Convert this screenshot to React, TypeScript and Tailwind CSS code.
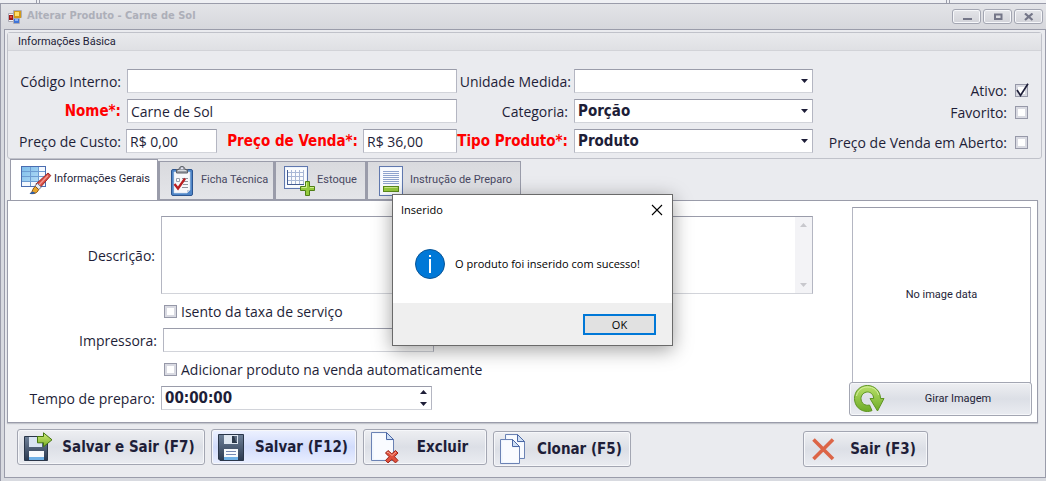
import React, { useState } from "react";

const fieldBorder =
  "border border-t-[#9a9caa] border-l-[#b4b6c2] border-r-[#b4b6c2] border-b-[#d2d4da] bg-white outline-none";
const textField = `${fieldBorder} h-6 px-[3px] text-[14px] text-[#1e1e38]`;
const buttonBase =
  "flex items-center rounded-[3px] border border-[#a3a6b2] bg-linear-to-b shadow-[inset_0_0_0_1px_#f6f7fa]";
const buttonGrey = "from-[#eeeff2] via-[#dcdfe6] to-[#eaecf1]";
const buttonBlue = "from-[#eef2ff] via-[#d2dcfc] to-[#eaefff]";
const boldFont = "font-['DejaVu_Sans_Condensed','DejaVu_Sans',sans-serif] font-bold";
const smallFont = "font-['Roboto',sans-serif] text-[11px]";

function AppIcon() {
  return (
    <svg width="14" height="14" viewBox="0 0 14 14" aria-hidden="true">
      <path d="M.5 3.500h5v8h-5zM5.500.5h8v7h-8zM5.500 8.500h6v5h-6z" fill="#f4f4f7" stroke="#aaa9b4" />
      <rect x="1" y="5" width="4" height="5" fill="#a01818" />
      <rect x="2" y="6" width="2" height="2" fill="#e04a3a" />
      <rect x="6" y="1" width="7" height="7" fill="#d29a18" />
      <rect x="7" y="2" width="4" height="4" fill="#ffe06a" />
      <rect x="6" y="9" width="5" height="4" fill="#3f74d8" />
      <rect x="7" y="9" width="3" height="2" fill="#8bb4f5" />
    </svg>
  );
}

function TableBrushIcon() {
  return (
    <svg width="32" height="32" viewBox="0 0 32 32" aria-hidden="true">
      <defs>
        <linearGradient id="cells" x1="0" y1="0" x2="1" y2="1">
          <stop offset="0" stopColor="#7dbdea" />
          <stop offset="1" stopColor="#b2dbf6" />
        </linearGradient>
      </defs>
      <rect x="1.500" y="2.500" width="24" height="20" fill="#f3f8fe" stroke="#4a6cb0" />
      <rect x="2" y="3" width="16" height="15" fill="url(#cells)" />
      <path d="M2 7.500h23M2 12.500h23M2 17.500h23M10.500 3v19M18.500 3v19" stroke="#6d9cd2" fill="none" />
      <path d="M28 9l2.800 2.500-11 12.500-4-3.800z" fill="#d94a40" stroke="#9c2b28" />
      <path d="M28 11.500L18 22" stroke="#f49a90" strokeWidth="1.400" />
      <path d="M17.500 19.500l3.800 3.700-2.500 2.300-4-3.500z" fill="#e8ebf2" stroke="#74809a" />
      <path d="M15.500 22.500l3 3c-1 4-5 4.500-8 4 2.500-2 2-6 5-7z" fill="#e8a52c" stroke="#8c5712" />
      <path d="M9.500 29.800c1.500.6 4.500.2 6-1l-3-1.300z" fill="#2b5fae" />
    </svg>
  );
}

function ClipboardIcon() {
  return (
    <svg width="32" height="32" viewBox="0 0 32 32" aria-hidden="true">
      <rect x="5.500" y="4.500" width="21" height="26" rx="1.500" fill="#4f86c8" stroke="#2c5590" />
      <path d="M8 7h16v18l-3 3H8z" fill="#f7f8fb" stroke="#d2dcec" strokeWidth=".6" />
      <path d="M24 25l-3 3v-3z" fill="#c3cddd" />
      <path d="M13 4.500c0-4 6-4 6 0h2.500v3.500h-11V4.500z" fill="#9a9ea6" stroke="#5c6068" />
      <path d="M12 5.500h8" stroke="#d9dce0" />
      <circle cx="16" cy="3.300" r="1" fill="#eef" />
      <path d="M10.500 13.500h3v3h-3z" fill="#fff" stroke="#999eaa" />
      <path d="M16 13.500h6M18 16.500h4M17 19.500h5M16 22.500h6" stroke="#8e949f" />
      <path d="M8.500 19l3.500 4.500 7-10" fill="none" stroke="#b81e22" strokeWidth="2.300" />
    </svg>
  );
}

function TableAddIcon() {
  return (
    <svg width="32" height="32" viewBox="0 0 32 32" aria-hidden="true">
      <rect x="1.500" y="1.500" width="23" height="22" fill="#eef4fc" stroke="#5f77ae" />
      <rect x="3" y="3" width="20" height="19" fill="#fff" opacity=".7" />
      <path d="M4 7.500h17M4 11.500h17M4 15.500h17M8.500 5v14M12.500 5v14M16.500 5v14M20.500 5v14" stroke="#a9b8d6" fill="none" />
      <path d="M4.500 5v15M4 19.500h17" stroke="#435c92" fill="none" />
      <path d="M22.500 16.500h4v5h5v4h-5v5h-4v-5h-5v-4h5z" fill="#93c93c" stroke="#4f7f16" />
      <path d="M23.500 17.500v5h-5M27 22.500h4" stroke="#d2ee92" fill="none" />
    </svg>
  );
}

function DocumentIcon() {
  return (
    <svg width="32" height="32" viewBox="0 0 32 32" aria-hidden="true">
      <rect x="4.500" y="1.500" width="23" height="29" fill="#f1f6fd" stroke="#6078ae" />
      <rect x="6" y="3" width="20" height="26" fill="#fff" opacity=".6" />
      <path d="M8 6.500h16M8 8.500h16M8 10.500h16M8 12.500h16M8 14.500h16M8 16.500h16M8 18.500h16" stroke="#8ea3cd" />
      <rect x="8.500" y="21.500" width="15" height="5" fill="#95c93e" stroke="#5b8a1c" />
      <path d="M9.500 22.500h13" stroke="#cbe889" />
    </svg>
  );
}

function Floppy({ arrow = false }: { arrow?: boolean }) {
  return (
    <svg width="32" height="32" viewBox="0 0 32 32" aria-hidden="true">
      <defs>
        <linearGradient id="floppyBody" x1="0" y1="0" x2="0" y2="1">
          <stop offset="0" stopColor="#6f8199" />
          <stop offset="1" stopColor="#2b3950" />
        </linearGradient>
        <linearGradient id="arrowFill" x1="0" y1="0" x2="0" y2="1">
          <stop offset="0" stopColor="#d2ee7c" />
          <stop offset="1" stopColor="#77ad22" />
        </linearGradient>
      </defs>
      {arrow ? (
        <>
          <path d="M3.500 5.500h23v24h-23z" fill="url(#floppyBody)" stroke="#2a3649" />
          <path d="M8 6h13v10H8z" fill="#d9e4f3" />
          <path d="M8 20h15v9H8z" fill="#f8fafd" />
          <path d="M8 26h15v3H8z" fill="#6fb0e6" />
          <path d="M16.500 5.500h6V1.800l8.500 7-8.500 7v-4h-6z" fill="url(#arrowFill)" stroke="#447510" strokeLinejoin="round" />
        </>
      ) : (
        <>
          <path d="M3.500 3.500h25v26H5l-1.500-1.500z" fill="url(#floppyBody)" stroke="#2a3649" />
          <path d="M9 4h14v9H9z" fill="#dfe7f1" />
          <path d="M17 5h5v7h-5z" fill="#2c3849" />
          <path d="M19 5h3v6h-1z" fill="#5b6b82" />
          <path d="M9 18h14v11H9z" fill="#f8fafd" />
          <path d="M9 26h14v3H9z" fill="#6fb0e6" />
          <path d="M11 20.500h10M11 23.500h10" stroke="#7688b2" />
        </>
      )}
    </svg>
  );
}

function PageShape({ x, y, w, h }: { x: number; y: number; w: number; h: number }) {
  const r = x + w;
  return (
    <>
      <path d={`M${x} ${y}h${w - 7}l7 7v${h - 7}h${-w}z`} fill="#f0f6fe" stroke="#6b82b4" />
      <path d={`M${x + 1.5} ${y + 1.5}h${w - 9}v7h7v${h - 10}h${3 - w}z`} fill="#fff" opacity=".6" />
      <path d={`M${r - 7} ${y}v7h7z`} fill="#cfdff4" stroke="#4c68a6" />
    </>
  );
}

function DeletePageIcon() {
  return (
    <svg width="32" height="32" viewBox="0 0 32 32" aria-hidden="true">
      <PageShape x={4.5} y={1.5} w={22} h={28} />
      <path d="M18.500 22l2.500-2.500 3.800 3.300 3.700-3.300 2.500 2.500-3.500 3.700 3.500 3.700-2.500 2.500-3.700-3.500-3.800 3.500-2.500-2.500 3.600-3.700z" fill="#e0503c" stroke="#9b2418" strokeLinejoin="round" />
      <path d="M20 22l1-1 4 3.500L29 21" stroke="#f8a492" fill="none" />
    </svg>
  );
}

function CopyIcon() {
  return (
    <svg width="32" height="32" viewBox="0 0 32 32" aria-hidden="true">
      <PageShape x={8.5} y={1.5} w={19} h={24} />
      <PageShape x={3.5} y={6.5} w={19} h={24} />
    </svg>
  );
}

function RotateIcon() {
  return (
    <svg width="32" height="32" viewBox="0 0 32 32" aria-hidden="true">
      <defs>
        <linearGradient id="rot" x1="0" y1="0" x2="0" y2="1">
          <stop offset="0" stopColor="#b9e06a" />
          <stop offset="1" stopColor="#6dab26" />
        </linearGradient>
      </defs>
      <path
        d="M27.500 15.500C27.500 8 21.500 2.500 14.500 2.500 7 2.500 1.500 8 1.500 15.500S7 28.500 14.500 28.500c1.500 0 3-.3 4.500-.9l-2.500-5.600c-4.500 1.300-8.500-2-8.500-6.500 0-3.500 3-6.500 6.500-6.500 3 0 6 2.300 6.200 6.500H17l7.500 12.500 6.500-12.500z"
        fill="url(#rot)"
        stroke="#5d9420"
        strokeLinejoin="round"
      />
      <path d="M3.500 13C5 6.500 10 4 14.500 4 20 4 24.500 7 25.500 12" fill="none" stroke="#d6efa0" />
    </svg>
  );
}

function ExitIcon() {
  return (
    <svg width="32" height="32" viewBox="0 0 32 32" aria-hidden="true">
      <path d="M6.500 6.500l19.500 19.500M26 6.500L6.500 26" stroke="#dc6547" strokeWidth="3.600" />
    </svg>
  );
}

function Check({ id, on = false }: { id: string; on?: boolean }) {
  const [checked, setChecked] = useState(on);
  return (
    <span className="relative flex size-[13px] shrink-0">
      <input
        id={id}
        type="checkbox"
        checked={checked}
        onChange={(e) => setChecked(e.target.checked)}
        className="size-[13px] appearance-none border border-[#9698a8] bg-white shadow-[inset_0_0_0_2px_#d9dae2]"
      />
      {checked && (
        <svg width="15" height="15" viewBox="0 0 15 15" className="pointer-events-none absolute -top-px left-0" aria-hidden="true">
          <path d="M2 7l3.500 5.500L13 .8" fill="none" stroke="#1e1e38" strokeWidth="1.700" />
        </svg>
      )}
    </span>
  );
}

function Combo({ id, value }: { id: string; value: string }) {
  return (
    <span className="relative flex w-[239px]">
      <select id={id} defaultValue={value} className={`${fieldBorder} ${boldFont} h-6 w-full appearance-none px-[3px] text-[15px] text-[#1e1e38]`}>
        <option value={value}>{value}</option>
      </select>
      <svg width="7" height="4" viewBox="0 0 7 4" className="pointer-events-none absolute top-[10px] right-[5px]" aria-hidden="true">
        <path d="M0 0h7L3.500 4z" fill="#1e1e38" />
      </svg>
    </span>
  );
}

function Label({ id, className = "text-[14px]", children }: { id: string; className?: string; children: React.ReactNode }) {
  return (
    <label htmlFor={id} className={`shrink-0 whitespace-nowrap text-right ${className}`}>
      {children}
    </label>
  );
}

const required = `${boldFont} text-[15px] text-[#ff0000]`;

function WindowButton({ label, children }: { label: string; children: React.ReactNode }) {
  return (
    <button aria-label={label} className={`${buttonBase} from-[#e4e5e9] to-[#d2d3d9] h-[15px] w-[29px] justify-center`}>
      <svg width="10" height="8" viewBox="0 0 10 8" aria-hidden="true">
        {children}
      </svg>
    </button>
  );
}

function Tab({ active = false, className = "", icon, children }: { active?: boolean; className?: string; icon: React.ReactNode; children: React.ReactNode }) {
  return (
    <button
      role="tab"
      aria-selected={active}
      className={`${smallFont} flex items-center border border-[#9a9caa] whitespace-nowrap ${
        active
          ? "-mb-px h-[42px] border-b-0 bg-white pb-[2px] text-[#1e1e38]"
          : "h-[39px] border-l-2 bg-linear-to-b from-[#d9dade] to-[#e4e5e9] text-[#484862]"
      } ${className}`}
    >
      {icon}
      {children}
    </button>
  );
}

function ActionButton({ className = "", blue = false, icon, children }: { className?: string; blue?: boolean; icon: React.ReactNode; children: React.ReactNode }) {
  return (
    <button className={`${buttonBase} ${blue ? buttonBlue : buttonGrey} ${boldFont} h-9 pl-[3px] text-[15px] ${className}`}>
      {icon}
      <span className="flex-1 whitespace-nowrap text-center">{children}</span>
    </button>
  );
}

export default function App() {
  return (
    <div className="relative flex min-h-screen flex-col bg-[#d8dae0] font-['Open_Sans',sans-serif] text-[#1e1e38]">
      <div className="flex h-[3px] justify-between bg-[#eff0f4] px-9">
        <span className="w-1 border-x border-[#9a9caa]" />
        <span className="mr-[60px] w-1 border-x border-[#9a9caa]" />
      </div>
      <div className="flex flex-1 flex-col border-t border-l border-[#9a9caa] pl-[3px]">
        <header className="-ml-[3px] flex h-[25px] items-center bg-linear-to-b from-[#e3e4e8] to-[#d6d7dc] pr-[3px] pl-[7px]">
          <AppIcon />
          <h1 className={`${boldFont} ml-[5px] flex-1 text-[11px] text-[#adafb9]`}>Alterar Produto - Carne de Sol</h1>
          <div className="flex gap-[2px]">
            <WindowButton label="Minimizar">
              <path d="M1 6h9" stroke="#747688" strokeWidth="2" />
            </WindowButton>
            <WindowButton label="Maximizar">
              <path d="M2 1.500h6.500v4.500H2z" fill="none" stroke="#747688" strokeWidth="2" />
            </WindowButton>
            <WindowButton label="Fechar">
              <path d="M1 .5l7.500 6.500M8.500.5L1 7" stroke="#747688" strokeWidth="2.200" />
            </WindowButton>
          </div>
        </header>

        <main className="mb-[3px] flex flex-1 flex-col border border-[#9a9caa] bg-[#eaebef] pt-[2px] pr-[3px] pl-[2px]">
          <section className="rounded-[3px] border border-[#c0c2ca]">
            <h2 className={`${smallFont} h-[18px] border-b border-[#d2d3d8] bg-linear-to-b from-[#e9eaed] to-[#dfe0e4] pl-[10px] leading-[18px]`}>
              Informações Básica
            </h2>
            <div className="flex pt-[18px] pb-[5px]">
              <div className="flex min-w-0 flex-1 flex-col gap-[6px]">
                <div className="flex items-center">
                  <Label id="codigo" className="mr-[6px] w-[113px] text-[14px]">Código Interno:</Label>
                  <input id="codigo" className={`${textField} min-w-0 flex-1`} />
                  <Label id="unidade" className="mr-[3px] w-[114px] text-[14px]">Unidade Medida:</Label>
                  <Combo id="unidade" value="" />
                </div>
                <div className="flex items-center">
                  <Label id="nome" className={`${required} mr-[6px] w-[113px]`}>Nome*:</Label>
                  <input id="nome" defaultValue="Carne de Sol" className={`${textField} min-w-0 flex-1`} />
                  <Label id="categoria" className="mr-[6px] w-[111px] text-[14px]">Categoria:</Label>
                  <Combo id="categoria" value="Porção" />
                </div>
                <div className="flex items-center">
                  <Label id="custo" className="mr-[5px] w-[113px] text-[14px]">Preço de Custo:</Label>
                  <input id="custo" defaultValue="R$ 0,00" className={`${textField} w-[91px]`} />
                  <Label id="venda" className={`${required} mr-[5px] ml-auto`}>Preço de Venda*:</Label>
                  <input id="venda" defaultValue="R$ 36,00" className={`${textField} w-[94px]`} />
                  <Label id="tipo" className={`${required} mr-[6px] w-[111px]`}>Tipo Produto*:</Label>
                  <Combo id="tipo" value="Produto" />
                </div>
              </div>
              <div className="flex w-[228px] flex-col items-end pt-[9px] pr-[13px]">
                <div className="flex h-6 items-center gap-2"><Label id="ativo">Ativo:</Label><Check id="ativo" on /></div>
                <div className="flex h-5 items-center gap-2"><Label id="favorito">Favorito:</Label><Check id="favorito" /></div>
                <div className="mt-[10px] flex h-5 items-center gap-2"><Label id="aberto">Preço de Venda em Aberto:</Label><Check id="aberto" /></div>
              </div>
            </div>
          </section>

          <div role="tablist" className="flex h-[41px] items-end pl-[3px]">
            <Tab active className="w-[148px] gap-[2px] pl-[9px]" icon={<TableBrushIcon />}>Informações Gerais</Tab>
            <Tab className="w-[116px] gap-[3px] border-l-0 pl-[6px]" icon={<ClipboardIcon />}>Ficha Técnica</Tab>
            <Tab className="w-[92px] gap-[2px] pl-[7px]" icon={<TableAddIcon />}>Estoque</Tab>
            <Tab className="w-[155px] gap-[3px] pl-[7px]" icon={<DocumentIcon />}>Instrução de Preparo</Tab>
          </div>

          <section className="mr-1 flex border border-[#9a9caa] bg-white py-[6px] shadow-[0_1px_1px_#c4c6cd]">
            <div className="flex min-w-0 flex-1 flex-col">
              <div className="mt-[9px] flex items-center">
                <Label id="descricao" className="mr-[6px] w-[147px] text-[14px]">Descrição:</Label>
                <div className={`${fieldBorder} flex h-[78px] flex-1`}>
                  <textarea id="descricao" className="min-w-0 flex-1 resize-none p-1 text-[14px] outline-none" />
                  <div className="flex w-[17px] flex-col items-center justify-between bg-[#f3f3f6] py-[6px]">
                    <svg width="7" height="4" viewBox="0 0 7 4" aria-hidden="true"><path d="M0 4h7L3.500 0z" fill="#c8c8cd" /></svg>
                    <svg width="7" height="4" viewBox="0 0 7 4" aria-hidden="true"><path d="M0 0h7L3.500 4z" fill="#c8c8cd" /></svg>
                  </div>
                </div>
              </div>
              <div className="flex h-[34px] items-center gap-1 pl-[156px]"><Check id="isento" /><Label id="isento">Isento da taxa de serviço</Label></div>
              <div className="flex items-center">
                <Label id="impressora" className="mr-[6px] w-[149px] text-[14px]">Impressora:</Label>
                <input id="impressora" className={`${textField} w-[271px]`} />
              </div>
              <div className="flex h-[34px] items-center gap-1 pl-[156px]"><Check id="adicionar" /><Label id="adicionar">Adicionar produto na venda automaticamente</Label></div>
              <div className="flex items-center">
                <Label id="tempo" className="mr-[6px] w-[147px] text-[14px]">Tempo de preparo:</Label>
                <div className={`${fieldBorder} flex h-6 w-[271px] items-center`}>
                  <input id="tempo" defaultValue="00:00:00" className={`${boldFont} min-w-0 flex-1 px-[3px] text-[15px] outline-none`} />
                  <div className="mr-1 flex flex-col gap-2">
                    <button aria-label="Aumentar"><svg className="block" width="7" height="4" viewBox="0 0 7 4"><path d="M0 4h7L3.500 0z" fill="#1e1e38" /></svg></button>
                    <button aria-label="Diminuir"><svg className="block" width="7" height="4" viewBox="0 0 7 4"><path d="M0 0h7L3.500 4z" fill="#1e1e38" /></svg></button>
                  </div>
                </div>
              </div>
            </div>
            <div className="ml-9 flex w-[188px] flex-col pr-[5px]">
              <div className={`${smallFont} ml-[3px] flex h-[176px] w-[179px] items-center justify-center border border-[#b4b6c2] border-t-[#9a9caa]`}>No image data</div>
              <button className={`${buttonBase} ${buttonGrey} ${smallFont} -mt-px h-[34px] pl-[3px]`}>
                <RotateIcon />
                <span className="flex-1 text-center">Girar Imagem</span>
              </button>
            </div>
          </section>

          <footer className="flex items-start pt-[6px] pb-[9px] pl-[10px]">
            <ActionButton className="w-[188px]" icon={<Floppy arrow />}>Salvar e Sair (F7)</ActionButton>
            <ActionButton blue className="ml-[6px] w-[146px]" icon={<Floppy />}>Salvar (F12)</ActionButton>
            <ActionButton className="ml-[6px] w-[124px]" icon={<DeletePageIcon />}>Excluir</ActionButton>
            <ActionButton className="mt-[2px] ml-[6px] w-[138px]" icon={<CopyIcon />}>Clonar (F5)</ActionButton>
            <ActionButton className="mt-[2px] mr-[114px] ml-auto w-[125px]" icon={<ExitIcon />}>Sair (F3)</ActionButton>
          </footer>
        </main>
      </div>

      <div
        role="dialog"
        aria-labelledby="dialog-title"
        className="absolute top-[194px] left-[392px] flex w-[281px] flex-col border border-[#6a6a6a] bg-white text-[11px] text-black shadow-[0_4px_18px_rgba(0,0,0,0.38)]"
      >
        <div className="flex h-[30px] items-center justify-between pr-[9px] pl-2">
          <h2 id="dialog-title">Inserido</h2>
          <button aria-label="Fechar mensagem">
            <svg className="block" width="12" height="12" viewBox="0 0 12 12"><path d="M1 1l10 10M11 1L1 11" stroke="#000" strokeWidth="1.100" /></svg>
          </button>
        </div>
        <div className="flex h-[78px] items-center gap-[10px] pl-[22px]">
          <svg width="30" height="30" viewBox="0 0 30 30" aria-hidden="true">
            <circle cx="15" cy="15" r="14.500" fill="#0078d7" stroke="#0a5596" />
            <path d="M15 6v2M15 10v14" stroke="#fff" strokeWidth="2" />
          </svg>
          <p className="whitespace-nowrap">O produto foi inserido com sucesso!</p>
        </div>
        <div className="flex h-[42px] items-center justify-end bg-[#efefef] pr-4">
          <button className="h-[21px] w-[73px] border-2 border-[#0078d7] bg-[#e1e1e1] leading-[17px]">OK</button>
        </div>
      </div>
    </div>
  );
}
